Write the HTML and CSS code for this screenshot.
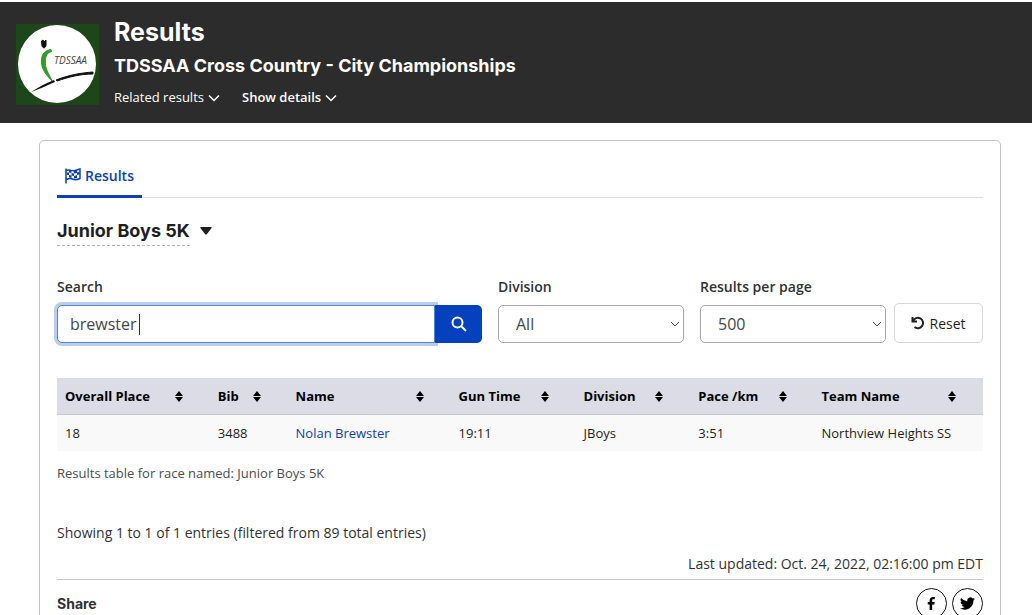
FILE: index.html
```html
<!DOCTYPE html>
<html lang="en">
<head>
    <meta charset="UTF-8">
    <meta name="viewport" content="width=device-width, initial-scale=1.0">
    <title>Results - TDSSAA Cross Country</title>
    <link rel="stylesheet" href="styles.css">
</head>
<body>
    <!-- Event header -->
    <header class="event-header">
        <svg class="event-logo" viewBox="0 0 83 81" role="img" aria-label="TDSSAA logo">
            <rect width="83" height="81" fill="#1d4718"/>
            <circle cx="41" cy="40" r="39" fill="#fff"/>
            <path d="M35 25.500c-6 1-9 4-9.500 10-1 9 5 16 11 22-4-8-8-14-7-21 0-5 2-8 6-9z" fill="#2f9c2b" stroke="#2f9c2b"/>
            <path d="M25.500 17l.5 5c1 3 4 2 4-1v-5l-2 2-1-2z" fill="#111" stroke="#111"/>
            <path d="M15 68c8-5 15-9 23-12l1 2c-9 4-16 7-24 10z" fill="#111"/>
            <path d="M40 56c13-5 24-7 37-8v2c-13 0-24 3-36 7z" fill="#111" stroke="#111"/>
            <text x="38" y="40" class="logo-text">TDSSAA</text>
        </svg>
        <div class="event-info">
            <h1>Results</h1>
            <h2>TDSSAA Cross Country - City Championships</h2>
            <div class="event-links">
                <button type="button">Related results
                    <svg class="chevron" viewBox="0 0 24 16"><path d="M2 3l10 10L22 3"/></svg>
                </button>
                <button type="button" class="strong">Show details
                    <svg class="chevron" viewBox="0 0 24 16"><path d="M2 3l10 10L22 3"/></svg>
                </button>
            </div>
        </div>
    </header>

    <main class="card">
        <nav class="tabs">
            <a href="#results" class="tab">
                <svg class="flag" viewBox="0 0 32 32">
                    <path d="M2 1v30M3 5c6-3 11 2 17 0 4-1 6-2 10-3v19c-6 3-11 3-15 1s-8-1-12 1" fill="none" stroke="currentColor" stroke-width="3"/>
                    <path d="M8 4l5 1v5l-5-1zM18 6l6-1v5l-6 1zM4 9l4 0v5H4zM13 10l5 1v5l-5-1zM24 9l5-2v6l-5 1zM8 14l5 1v5l-5-1zM18 16l6-2v6l-6 1z" fill="currentColor"/>
                </svg>
                Results
            </a>
        </nav>

        <button type="button" class="race-picker">
            <span>Junior Boys 5K</span>
            <svg viewBox="0 0 12 8"><path d="M1 0h10q1 0 .6 1L7 7q-1 1-2 0L.4 1Q0 0 1 0z"/></svg>
        </button>

        <!-- Filters -->
        <form class="filters" id="results">
            <div class="field search">
                <label for="search">Search</label>
                <div class="search-group">
                    <input type="text" id="search" value="brewster">
                    <span class="caret"></span>
                    <button type="button" aria-label="Search">
                        <svg viewBox="0 0 16 16"><circle cx="6.500" cy="6.500" r="5"/><path d="M10.500 10.500l4.500 4.500"/></svg>
                    </button>
                </div>
            </div>
            <div class="field">
                <label for="division">Division</label>
                <div class="select-wrap">
                    <select id="division"><option>All</option></select>
                    <svg viewBox="0 0 10 6"><path d="M1 1l4 4 4-4"/></svg>
                </div>
            </div>
            <div class="field">
                <label for="perPage">Results per page</label>
                <div class="select-wrap">
                    <select id="perPage"><option>500</option></select>
                    <svg viewBox="0 0 10 6"><path d="M1 1l4 4 4-4"/></svg>
                </div>
            </div>
            <button type="button" class="reset-btn">
                <svg viewBox="0 0 14 14"><path d="M1.500 1v4.500H6M2 5.200A5.200 5.200 0 1 1 3.500 11"/></svg>
                Reset
            </button>
        </form>

        <!-- Results table -->
        <table class="results">
            <caption>Results table for race named: Junior Boys 5K</caption>
            <colgroup>
                <col class="col-place"><col class="col-bib"><col class="col-name"><col class="col-time"><col class="col-division"><col class="col-pace"><col>
            </colgroup>
            <thead>
                <tr>
                    <th><div>Overall Place <svg class="sort" viewBox="0 0 8 11"><path d="M4 0l4 5H0zM0 6h8l-4 5z"/></svg></div></th>
                    <th><div>Bib <svg class="sort" viewBox="0 0 8 11"><path d="M4 0l4 5H0zM0 6h8l-4 5z"/></svg></div></th>
                    <th><div>Name <svg class="sort" viewBox="0 0 8 11"><path d="M4 0l4 5H0zM0 6h8l-4 5z"/></svg></div></th>
                    <th><div>Gun Time <svg class="sort" viewBox="0 0 8 11"><path d="M4 0l4 5H0zM0 6h8l-4 5z"/></svg></div></th>
                    <th><div>Division <svg class="sort" viewBox="0 0 8 11"><path d="M4 0l4 5H0zM0 6h8l-4 5z"/></svg></div></th>
                    <th><div>Pace /km <svg class="sort" viewBox="0 0 8 11"><path d="M4 0l4 5H0zM0 6h8l-4 5z"/></svg></div></th>
                    <th><div>Team Name <svg class="sort" viewBox="0 0 8 11"><path d="M4 0l4 5H0zM0 6h8l-4 5z"/></svg></div></th>
                </tr>
            </thead>
            <tbody>
                <tr>
                    <td>18</td>
                    <td>3488</td>
                    <td><a href="#runner">Nolan Brewster</a></td>
                    <td>19:11</td>
                    <td>JBoys</td>
                    <td>3:51</td>
                    <td>Northview Heights SS</td>
                </tr>
            </tbody>
        </table>

        <p class="entries">Showing 1 to 1 of 1 entries (filtered from 89 total entries)</p>
        <p class="updated">Last updated: Oct. 24, 2022, 02:16:00 pm EDT</p>

        <footer class="share">
            <h3>Share</h3>
            <div class="share-links">
                <a href="#facebook" aria-label="Facebook">
                    <svg viewBox="0 0 16 16"><path d="M6 15V9H4V6.500h2V4.600C6 2.300 7.300 1 9.500 1H11.500v2.500H10C9 3.500 8.700 4 8.700 4.800v1.700h2.800L11 9H8.700v6z"/></svg>
                </a>
                <a href="#twitter" aria-label="Twitter">
                    <svg viewBox="0 0 24 24"><path d="M24 4.600a10 10 0 0 1-2.800.8 5 5 0 0 0 2.100-2.700 10 10 0 0 1-3.100 1.200 4.900 4.900 0 0 0-8.400 4.500A14 14 0 0 1 1.700 3.200a4.900 4.900 0 0 0 1.500 6.600 4.900 4.900 0 0 1-2.200-.6c0 2.300 1.600 4.400 3.900 4.900a5 5 0 0 1-2.200.1 4.900 4.900 0 0 0 4.600 3.400A9.900 9.900 0 0 1 0 19.600a14 14 0 0 0 21.500-12.500A10 10 0 0 0 24 4.600z"/></svg>
                </a>
            </div>
        </footer>
    </main>
</body>
</html>
```
FILE: styles.css
```css
* {
    box-sizing: border-box;
}

body {
    margin: 0;
    padding-top: 2px;
    font-family: "Open Sans", sans-serif;
    font-size: 14px;
    line-height: 20px;
    color: #303236;
    background-color: #fff;
}

h1, h2, h3, p {
    margin: 0;
}

button {
    font-family: inherit;
    cursor: pointer;
}

a {
    color: #0b41b5;
    text-decoration: none;
}

/* Event header */
.event-header {
    display: flex;
    gap: 15px;
    padding: 13px 16px 15px;
    color: #fff;
    background-color: #2c2c2c;
}

.event-logo {
    width: 83px;
    height: 81px;
    margin-top: 9px;
}

.logo-text {
    font-size: 10px;
    font-style: italic;
    fill: #444;
}

.event-header h1 {
    font-family: Inter, sans-serif;
    font-size: 25px;
    line-height: 34px;
}

.event-header h2 {
    font-family: Inter, sans-serif;
    font-size: 18px;
    line-height: 34px;
}

.event-links {
    display: flex;
    gap: 22px;
    padding-top: 4px;
}

.event-links button {
    display: flex;
    align-items: center;
    gap: 4px;
    padding: 0;
    border: none;
    background: none;
    color: #fff;
    font-size: 13px;
    line-height: 21px;
}

.event-links .strong {
    font-weight: 600;
}

.chevron {
    width: 12px;
    height: 8px;
    fill: none;
    stroke: currentColor;
    stroke-width: 3;
}

/* Card */
.card {
    margin: 17px 31px 0 39px;
    padding: 16px 17px 24px;
    border: 1px solid #c4c4c8;
    border-radius: 5px;
}

.tabs {
    display: flex;
    border-bottom: 1px solid #dfdfe3;
}

.tab {
    display: flex;
    align-items: center;
    gap: 4px;
    height: 41px;
    margin-bottom: -1px;
    padding: 0 8px;
    border-bottom: 3px solid #0b41b5;
    font-weight: 600;
}

.flag {
    width: 16px;
    height: 16px;
}

.race-picker {
    display: flex;
    align-items: center;
    gap: 10px;
    margin-top: 18px;
    padding: 0;
    border: none;
    background: none;
    color: #1d1e20;
    font-family: Inter, sans-serif;
    font-size: 18px;
    font-weight: 700;
    line-height: 29px;
}

.race-picker span {
    border-bottom: 1px dashed #b5b5b9;
}

.race-picker svg {
    width: 12px;
    height: 8px;
    fill: currentColor;
}

/* Filters */
.filters {
    display: flex;
    align-items: flex-end;
    gap: 16px;
    margin-top: 31px;
}

.field {
    flex: 0 1 186px;
}

.search {
    flex: 1 1 0;
}

.field label {
    display: block;
    margin-bottom: 8px;
    font-weight: 600;
}

.search-group {
    position: relative;
    display: flex;
}

.search-group input {
    flex: 1;
    min-width: 0;
    height: 38px;
    padding: 0 12px;
    border: 1px solid #4f83dc;
    border-radius: 5px 0 0 5px;
    outline: none;
    box-shadow: 0 0 0 3px #b9cdf0;
    color: #45474b;
    font-family: inherit;
    font-size: 16px;
}

/* Text cursor after the typed value */
.caret {
    position: absolute;
    top: 9px;
    left: 82px;
    width: 1px;
    height: 21px;
    background-color: #303236;
}

.search-group button {
    position: relative;
    display: flex;
    align-items: center;
    justify-content: center;
    width: 47px;
    border: none;
    border-radius: 0 5px 5px 0;
    background-color: #0540bd;
}

.search-group svg {
    width: 16px;
    height: 16px;
    fill: none;
    stroke: #fff;
    stroke-width: 2;
}

.select-wrap {
    position: relative;
}

.select-wrap select {
    display: block;
    width: 100%;
    height: 38px;
    padding: 0 17px;
    border: 1px solid #a5a5aa;
    border-radius: 5px;
    appearance: none;
    background-color: #fff;
    color: #45474b;
    font-family: inherit;
    font-size: 16px;
}

.select-wrap svg {
    position: absolute;
    top: 16px;
    right: 4px;
    width: 10px;
    height: 6px;
    fill: none;
    stroke: #45474b;
    pointer-events: none;
}

.reset-btn {
    display: flex;
    align-items: center;
    justify-content: center;
    gap: 4px;
    width: 89px;
    height: 40px;
    margin-left: -8px;
    padding: 0;
    border: 1px solid #d8d8dc;
    border-radius: 5px;
    background-color: #fff;
    color: #1d1e20;
    font-size: 14px;
}

.reset-btn svg {
    width: 14px;
    height: 14px;
    fill: none;
    stroke: currentColor;
    stroke-width: 2;
}

/* Results table */
.results {
    width: 100%;
    margin-top: 35px;
    border-collapse: collapse;
    table-layout: fixed;
    font-size: 13px;
}

.col-place {
    width: 16.5%;
}

.col-bib {
    width: 8.4%;
}

.col-name {
    width: 17.6%;
}

.col-time {
    width: 13.5%;
}

.col-division {
    width: 12.4%;
}

.col-pace {
    width: 13.3%;
}

.results caption {
    caption-side: bottom;
    padding-top: 12px;
    color: #4a4c50;
    text-align: left;
}

.results th {
    padding: 8px 27px 8px 8px;
    border-bottom: 1px solid #c6c6d2;
    background-color: #dcdce6;
    color: #000;
    text-align: left;
    white-space: nowrap;
}

.results th div {
    display: flex;
    align-items: center;
    justify-content: space-between;
}

.results td {
    padding: 8px;
    background-color: #f9f9f9;
    color: #1d1e20;
    white-space: nowrap;
}

.sort {
    width: 8px;
    height: 11px;
}

.entries {
    margin-top: 40px;
}

.updated {
    margin-top: 11px;
    text-align: right;
}

/* Share */
.share {
    display: flex;
    align-items: center;
    justify-content: space-between;
    margin-top: 5px;
    padding-top: 8px;
    border-top: 1px solid #c8c8cc;
}

.share h3 {
    font-family: Inter, sans-serif;
    font-size: 14px;
}

.share-links {
    display: flex;
    gap: 5px;
}

.share-links a {
    display: flex;
    align-items: center;
    justify-content: center;
    width: 31px;
    height: 31px;
    border: 1px solid #111;
    border-radius: 50%;
}

.share-links svg {
    width: 15px;
    height: 15px;
    fill: #000;
}
```
